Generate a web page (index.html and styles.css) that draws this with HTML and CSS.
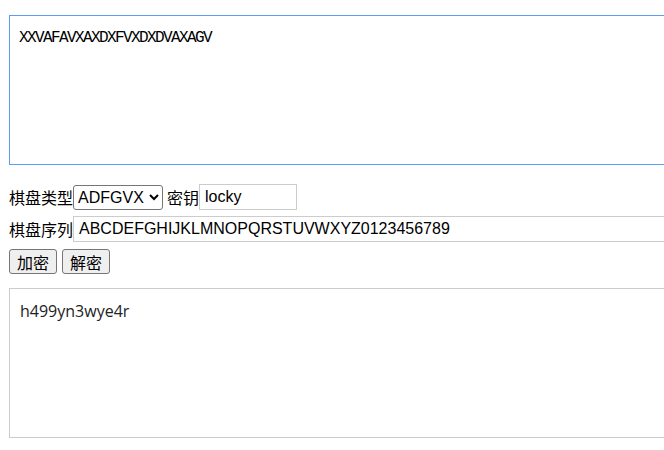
FILE: index.html
```html
<!DOCTYPE html>
<html lang="zh">
<head>
    <meta charset="UTF-8">
    <title>ADFGVX</title>
    <link rel="stylesheet" href="styles.css">
</head>
<body>
    <div class="container">
        <!-- 明文 -->
        <textarea id="plain" class="plain">XXVAFAVXAXDXFVXDXDVAXAGV</textarea>

        <div class="row first">
            <label class="label">棋盘类型</label>
            <select id="type" class="type">
                <option value="ADFGVX" selected>ADFGVX</option>
                <option value="ADFGX">ADFGX</option>
            </select>
            <label class="label gap">密钥</label>
            <input type="text" id="key" class="key" value="locky">
        </div>

        <div class="row">
            <label class="label">棋盘序列</label>
            <input type="text" id="seq" class="seq" value="ABCDEFGHIJKLMNOPQRSTUVWXYZ0123456789">
        </div>

        <div class="row buttons">
            <button id="encrypt">加密</button>
            <button id="decrypt">解密</button>
        </div>

        <!-- 结果 -->
        <textarea id="result" class="result">h499yn3wye4r</textarea>
    </div>
</body>
</html>
```

FILE: styles.css
```css
body {
    margin: 0;
    padding: 0;
    background: #fff;
    font-family: "Liberation Sans", "Noto Sans CJK SC", sans-serif;
    font-size: 16px;
    color: #000;
}

.container {
    padding: 15px 0 0 9px;
    width: 720px;
}

textarea {
    display: block;
    box-sizing: border-box;
    width: 700px;
    height: 150px;
    margin: 0;
    resize: none;
    outline: none;
}

.plain {
    border: 1px solid #5b9cf5;
    padding: 13px 9px;
    font-family: "Liberation Mono", "Noto Sans CJK SC", monospace;
    font-size: 16px;
    letter-spacing: -1.6px;
}

.result {
    margin-top: 14px;
    border: 1px solid #cccccc;
    padding: 11px 10px;
    font-family: "Open Sans", "Noto Sans CJK SC", sans-serif;
    font-size: 16px;
    color: #222;
}

.row {
    display: flex;
    align-items: center;
    height: 26px;
    margin-top: 6px;
}

.row.first {
    margin-top: 19px;
}

.label {
    font-family: "Noto Sans CJK SC", sans-serif;
    font-size: 16px;
    line-height: 26px;
    white-space: nowrap;
}

.label.gap {
    margin-left: 4px;
}

.type {
    box-sizing: border-box;
    width: 90px;
    height: 25px;
    margin: 0;
    font-family: "Liberation Sans", sans-serif;
    font-size: 16px;
    border: 1px solid #767676;
    border-radius: 3px;
    background: #fff;
    padding: 0;
}

input {
    box-sizing: border-box;
    height: 26px;
    margin: 0;
    padding: 0 5px;
    border: 1px solid #cccccc;
    font-family: "Liberation Sans", sans-serif;
    font-size: 16px;
    outline: none;
}

.key {
    width: 98px;
}

.seq {
    width: 620px;
}

.buttons {
    margin-top: 7px;
    height: 25px;
}

button {
    box-sizing: border-box;
    height: 25px;
    width: 48px;
    margin: 0 5px 0 0;
    padding: 0;
    border: 1px solid #767676;
    border-radius: 3px;
    background: #efefef;
    font-family: "Noto Sans CJK SC", sans-serif;
    font-size: 16px;
    cursor: pointer;
}
```
